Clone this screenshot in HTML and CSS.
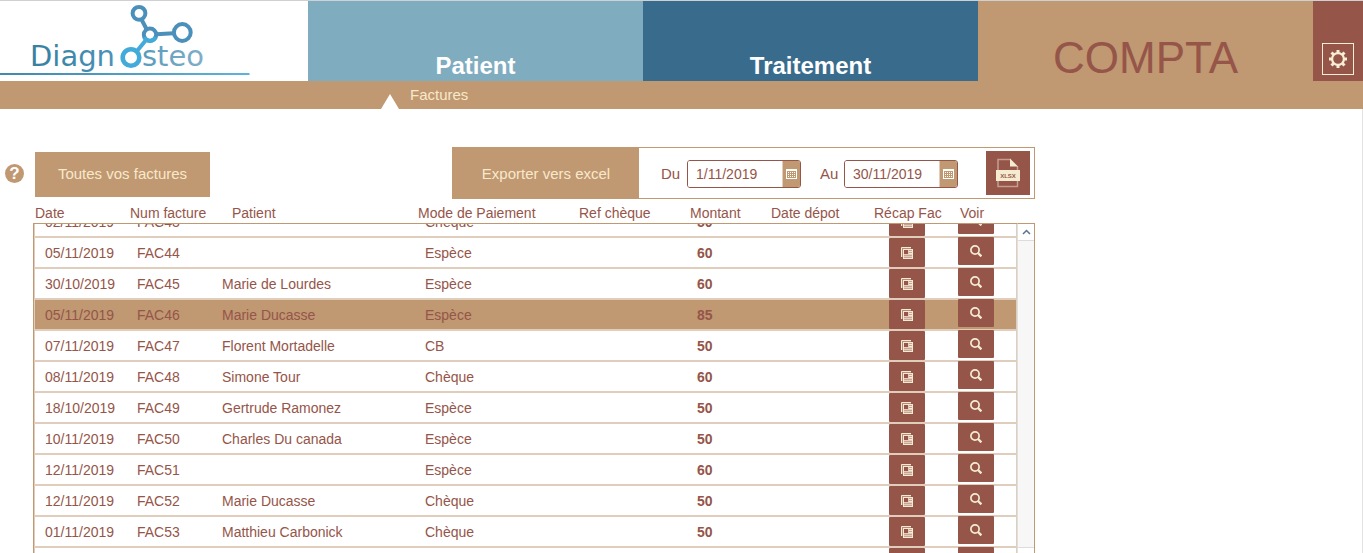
FILE: index.html
```html
<!DOCTYPE html>
<html lang="fr">
<head>
<meta charset="utf-8">
<title>Diagnosteo - Factures</title>
<link rel="stylesheet" href="styles.css">
</head>
<body>
<svg class="sprite" aria-hidden="true">
  <symbol id="pages" viewBox="0 0 12 12">
    <path d="M0.5 10V0.5H10" fill="none" stroke="#f5ebd0"/>
    <path d="M1 1h9v1H2v8H1z" fill="#b98a7c"/>
    <rect x="2" y="2" width="10" height="10" fill="#f5ebd0"/>
    <rect x="3" y="3" width="8" height="8" fill="#e3cdbd"/>
    <rect x="3" y="3" width="4" height="4" fill="#955549"/>
    <path d="M8 3.500h3M8 5.500h3M3 8.500h8M3 10.500h8" stroke="#c9a394"/>
    <path d="M8 4.500h3M8 6.500h3" stroke="#f5ebd0"/>
  </symbol>
  <symbol id="loupe" viewBox="0 0 12 12">
    <circle cx="5" cy="5" r="4.100" fill="none" stroke="#f5ebd0" stroke-width="1.700"/>
    <path d="M7.800 7.800l3.600 3.600" stroke="#f5ebd0" stroke-width="2.300"/>
  </symbol>
  <symbol id="calendar" viewBox="0 0 11 10">
    <path fill="#fff" d="M0 0h11v10H0z"/>
    <path fill="#c09872" d="M1 2h9v7H1z"/>
    <path d="M2 3.500h8M2 5.500h8M2 7.500h8" stroke="#fff" stroke-dasharray="1 1"/>
  </symbol>
</svg>

<header class="topbar">
  <a class="logo" href="#" aria-label="Diagnosteo">
    <svg width="250" height="80" viewBox="0 1 250 80">
      <defs>
        <linearGradient id="word" gradientUnits="userSpaceOnUse" x1="33" y1="0" x2="213" y2="0">
          <stop offset="0" stop-color="#37809f"/><stop offset=".5" stop-color="#4c94ba"/><stop offset="1" stop-color="#86b2c8"/>
        </linearGradient>
        <linearGradient id="rule" gradientUnits="userSpaceOnUse" x1="0" y1="0" x2="250" y2="0">
          <stop offset="0" stop-color="#4289ab"/><stop offset="1" stop-color="#5db3dc"/>
        </linearGradient>
      </defs>
      <text class="wordmark" x="30" y="66" fill="url(#word)">Diagn</text>
      <text class="wordmark" x="142" y="66" fill="url(#word)">steo</text>
      <g fill="none" stroke="#4b90bb" stroke-width="4">
        <path d="M141.500 19.500l5 9.500M156.500 34.200l17-1"/>
        <circle cx="139" cy="13.300" r="6.400"/>
        <circle cx="182.300" cy="32.500" r="8.400"/>
        <circle cx="150" cy="34.700" r="6.200"/>
      </g>
      <g fill="none" stroke="#42abd9" stroke-width="4">
        <path d="M144.400 37.200A6.200 6.200 0 0 0 155.600 37.200M146 40l-9 11" />
        <circle cx="131" cy="57.500" r="8.300" stroke-width="4.600"/>
      </g>
      <path d="M0 74h249.500" stroke="url(#rule)" stroke-width="2"/>
    </svg>
  </a>
  <nav class="tabs">
    <a class="tab tab-patient" href="#">Patient</a>
    <a class="tab tab-traitement" href="#">Traitement</a>
    <a class="tab tab-compta" href="#" aria-current="page">COMPTA</a>
  </nav>
  <div class="settings">
    <button class="gear" type="button" aria-label="Paramètres">
      <svg width="18" height="18" viewBox="0 0 18 18">
        <circle cx="9" cy="9" r="5.900" fill="none" stroke="#f8eed5" stroke-width="2.200"/>
        <g stroke="#f8eed5" stroke-width="3">
          <path d="M9 0v3M9 15v3M0 9h3M15 9h3M2.500 2.500l2 2M13.500 13.500l2 2M15.500 2.500l-2 2M4.500 13.500l-2 2"/>
        </g>
      </svg>
    </button>
  </div>
</header>
<nav class="subnav">
  <span class="marker"></span>
  <a href="#">Factures</a>
</nav>

<main class="page">
  <div class="content">
    <div class="toolbar">
      <button class="help" type="button" aria-label="Aide">?</button>
      <button class="all" type="button">Toutes vos factures</button>
      <form class="export">
        <button class="export-title" type="button">Exporter vers excel</button>
        <div class="range">
          <label for="from">Du</label>
          <span class="date">
            <input id="from" type="text" value="1/11/2019">
            <button type="button" aria-label="Choisir la date de début"><svg width="11" height="10"><use href="#calendar"/></svg></button>
          </span>
          <label class="label-to" for="to">Au</label>
          <span class="date">
            <input id="to" type="text" value="30/11/2019">
            <button type="button" aria-label="Choisir la date de fin"><svg width="11" height="10"><use href="#calendar"/></svg></button>
          </span>
          <button class="xlsx" type="button" aria-label="Exporter en XLSX">
            <svg width="26" height="30" viewBox="0 0 26 30">
              <path d="M3 12V1.500h12.500M22.500 8v4M3 22v6.500h19.500V22" fill="none" stroke="#c79d92" stroke-width="1.500"/>
              <path d="M15 0.500l8 8h-8z" fill="#f5ebd0"/>
              <path d="M1 12h24v11H1z" fill="#f5ebd0"/>
              <text class="xlsx-text" x="13" y="20" text-anchor="middle" fill="#955549">XLSX</text>
            </svg>
          </button>
        </div>
      </form>
    </div>

    <table class="invoices">
      <thead>
        <tr><th>Date</th><th>Num facture</th><th>Patient</th><th>Mode de Paiement</th><th>Ref chèque</th><th>Montant</th><th>Date dépot</th><th>Récap Fac</th><th>Voir</th></tr>
      </thead>
      <tbody id="rows"></tbody>
    </table>
    <div class="scrollbar">
      <button type="button" aria-label="Défiler vers le haut"><svg width="9" height="6" viewBox="0 0 9 6"><path d="M1 5l3.500-3.500L8 5" fill="none" stroke="#5a7391" stroke-width="1.500"/></svg></button>
      <span class="track"></span>
      <span class="thumb-end"></span>
    </div>
  </div>
</main>
<script src="rows.js"></script>
</body>
</html>
```
FILE: styles.css
```css
* { box-sizing: border-box; }

body {
  margin: 0;
  height: 100vh;
  display: flex;
  flex-direction: column;
  overflow: hidden;
  border-top: 1px solid #cdd1d4;
  background: #fff;
  color: #955549;
  font: 15px/18px "Liberation Sans", Arial, sans-serif;
}

a { color: inherit; text-decoration: none; }
button { margin: 0; padding: 0; border: 0; font: inherit; color: inherit; background: none; cursor: pointer; }
svg { display: block; }
.sprite { display: none; }

.topbar { display: flex; flex: none; height: 80px; }
.logo { flex: none; width: 308px; }
.wordmark { font: 29px "DejaVu Sans", sans-serif; }

.tabs { display: flex; flex: 1; }
.tab { flex: 1; display: flex; align-items: flex-end; justify-content: center; color: #fff; font-weight: bold; font-size: 24px; line-height: 30px; }
.tab-patient { background: #7facbf; }
.tab-traitement { background: #396c8c; }
.tab-compta { background: #c09872; color: #955549; font-weight: normal; font-size: 44px; line-height: 46px; }

.settings { width: 50px; background: #955549; display: flex; align-items: flex-end; justify-content: center; padding-bottom: 6px; }
.gear { width: 32px; height: 32px; border: 1px solid #f8eed5; display: grid; place-items: center; }

.subnav { flex: none; height: 28px; display: flex; align-items: center; padding-left: 381px; gap: 11px; background: #c09872; color: #f8e9cb; }
.marker { align-self: flex-end; width: 18px; height: 15px; background: #fff; clip-path: polygon(50% 0, 100% 100%, 0 100%); }

.page { flex: 1; min-height: 0; display: flex; border-right: 1px solid #e3e3e3; }
.content { flex: 1; min-height: 0; max-width: 1035px; display: grid; grid-template-columns: 33px minmax(0, 1fr) 18px; grid-template-rows: 90px 24px minmax(0, 1fr); }

.toolbar { grid-column: 1 / -1; display: flex; align-items: center; padding: 38px 0 0 5px; }
.help { width: 19px; height: 19px; border-radius: 50%; background: #c09872; color: #fff; font-weight: bold; font-size: 17px; line-height: 19px; }
.all { width: 175px; height: 45px; margin: 2px 0 0 11px; background: #c09872; color: #f8e9cb; }
.export { flex: 0 1 583px; height: 52px; margin-left: auto; display: flex; border: 1px solid #c09872; }
.export-title { width: 186px; padding-top: 2px; background: #c09872; color: #f8e9cb; }
.range { flex: 1; display: flex; align-items: center; padding: 0 4px 0 22px; }
.range label { width: 26px; padding-top: 2px; }
.range .label-to { width: 24px; margin-left: 19px; }
.date { display: flex; width: 114px; height: 28px; margin-top: 1px; border: 1px solid #955549; border-radius: 3px; overflow: hidden; }
.date input { flex: 1; min-width: 0; border: 0; padding: 0 0 0 8px; font: inherit; font-size: 14px; color: inherit; background: #fff; }
.date button { width: 18px; background: #c09872; border-left: 1px solid #e0cdbc; display: grid; place-items: center; }
.xlsx { width: 44px; height: 44px; margin-left: auto; background: #955549; display: grid; place-items: center; }
.xlsx-text { font: bold 6px "Liberation Sans", sans-serif; }

.invoices { display: contents; }
.invoices thead { grid-column: 1 / -1; display: block; padding-left: 35px; }
.invoices thead tr { display: grid; height: 24px; align-items: center; padding-top: 4px; grid-template-columns: minmax(0, 95fr) minmax(0, 102fr) minmax(0, 186fr) minmax(0, 161fr) minmax(0, 111fr) minmax(0, 81fr) minmax(0, 103fr) minmax(0, 86fr) minmax(0, 75fr); }
.invoices th { padding: 0; font-weight: normal; text-align: left; white-space: nowrap; font-size: 14px; line-height: 18px; }
.invoices tbody { grid-column: 2; display: block; min-height: 0; overflow: hidden; border-top: 1px solid #c09872; border-left: 1px solid #c09872; }
.invoices tbody tr {
  display: grid;
  grid-template-columns: minmax(0, 92fr) minmax(0, 85fr) minmax(0, 203fr) minmax(0, 161fr) minmax(0, 111fr) minmax(0, 81fr) minmax(0, 111fr) minmax(0, 69fr) minmax(0, 58fr);
  align-items: center;
  height: 31px;
  padding-left: 10px;
  border: solid #e0cdbc;
  border-width: 0 1px 2px;
}
.invoices tbody tr:first-child { margin-top: -17px; }
.invoices tbody tr.selected { background: #c09872; }
.invoices td { padding: 0; white-space: nowrap; font-size: 14px; line-height: 18px; }
.invoices .amount { font-weight: bold; }
.invoices .action { align-self: start; }
.action button { width: 36px; height: 29px; display: grid; place-items: center; background: #955549; border-radius: 1px; }
.action .view { height: 28px; margin-top: -1px; }

.scrollbar { grid-column: 3; display: flex; flex-direction: column; border-top: 1px solid #c09872; border-right: 1px solid #c09872; border-left: 1px solid #e0dfdf; }
.scrollbar button { height: 17px; display: grid; place-items: center; border-bottom: 1px solid #dcdcdc; }
.track { flex: 1; background: #f7f7f7; }
.thumb-end { height: 6px; border-top: 1px solid #dcdcdc; }
```
FILE: rows.js
```js
const invoices = [
  ["02/11/2019", "FAC43", "", "Chèque", 50],
  ["05/11/2019", "FAC44", "", "Espèce", 60],
  ["30/10/2019", "FAC45", "Marie de Lourdes", "Espèce", 60],
  ["05/11/2019", "FAC46", "Marie Ducasse", "Espèce", 85],
  ["07/11/2019", "FAC47", "Florent Mortadelle", "CB", 50],
  ["08/11/2019", "FAC48", "Simone Tour", "Chèque", 60],
  ["18/10/2019", "FAC49", "Gertrude Ramonez", "Espèce", 50],
  ["10/11/2019", "FAC50", "Charles Du canada", "Espèce", 50],
  ["12/11/2019", "FAC51", "", "Espèce", 60],
  ["12/11/2019", "FAC52", "Marie Ducasse", "Chèque", 50],
  ["01/11/2019", "FAC53", "Matthieu Carbonick", "Chèque", 50],
  ["", "", "", "", ""]
];
const selected = "FAC46";
document.getElementById("rows").innerHTML = invoices.map(([date, num, patient, mode, amount]) => `
  <tr class="${num === selected ? "selected" : ""}">
    <td>${date}</td><td>${num}</td><td>${patient}</td><td>${mode}</td><td></td>
    <td class="amount">${amount}</td><td></td>
    <td class="action"><button type="button" aria-label="Récapitulatif ${num}"><svg width="12" height="12"><use href="#pages"/></svg></button></td>
    <td class="action"><button class="view" type="button" aria-label="Voir ${num}"><svg width="12" height="12"><use href="#loupe"/></svg></button></td>
  </tr>`).join("");
```
